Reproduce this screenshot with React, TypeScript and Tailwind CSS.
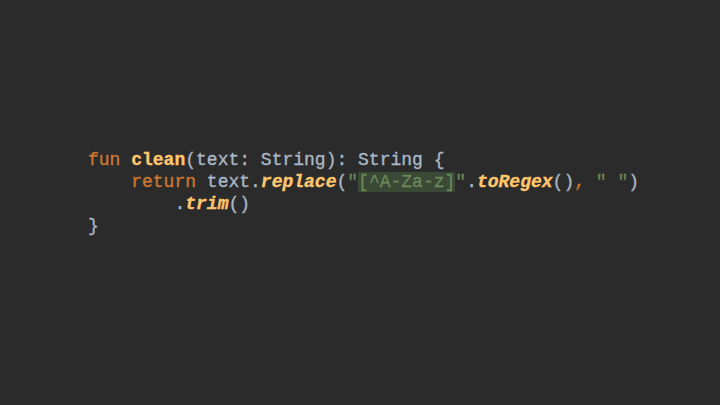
const kw = 'text-[#cc7832]';
const fn = 'text-[#ffc66d] font-bold';
const ext = 'text-[#ffc66d] italic font-bold';
const str = 'text-[#6a8759]';

const App = () => {
  return (
    <div className="w-[720px] h-[405px] bg-[#2b2b2b] flex flex-col pt-[149px] pl-[88px]">
      <pre className="font-['Liberation_Mono',monospace] text-[18px] leading-[22px] text-[#a9b7c6] [-webkit-text-stroke:0.35px_currentColor]">
        <div>
          <span className={kw}>fun </span>
          <span className={fn}>clean</span>
          (text: String): String {'{'}
        </div>
        <div>
          {'    '}
          <span className={kw}>return </span>
          text.
          <span className={ext}>replace</span>(
          <span className={str}>"</span>
          <span className={`${str} bg-[#3a4836]`}>[^A-Za-z]</span>
          <span className={str}>"</span>.
          <span className={ext}>toRegex</span>()
          <span className={kw}>, </span>
          <span className={str}>" "</span>)
        </div>
        <div>
          {'        '}.<span className={ext}>trim</span>()
        </div>
        <div>{'}'}</div>
      </pre>
    </div>
  );
};

export default App;
